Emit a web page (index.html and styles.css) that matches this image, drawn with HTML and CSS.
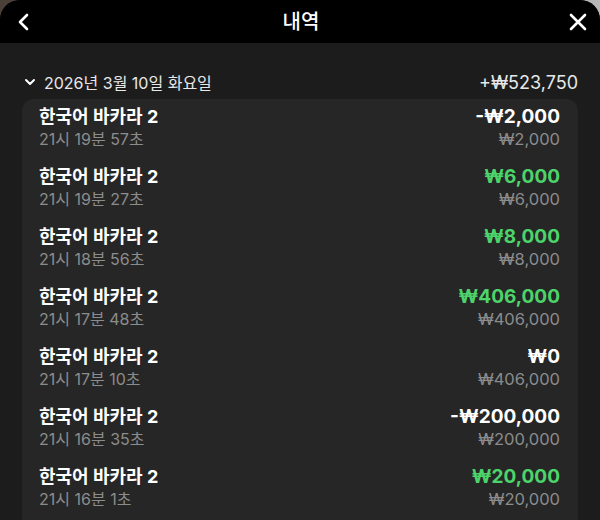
FILE: index.html
```html
<!DOCTYPE html>
<html lang="ko">
<head>
<meta charset="utf-8">
<link rel="stylesheet" href="styles.css">
</head>
<body>
<div class="sheet">
  <header class="header">
    <button class="icon-btn" aria-label="뒤로">
      <svg width="16" height="20" viewBox="0 0 16 20"><path d="M11 3 L4 10 L11 17" fill="none" stroke="#fff" stroke-width="2.6" stroke-linecap="round" stroke-linejoin="round"/></svg>
    </button>
    <h1 class="title">내역</h1>
    <button class="icon-btn" aria-label="닫기">
      <svg width="20" height="20" viewBox="0 0 20 20"><path d="M3 3 L17 17 M17 3 L3 17" fill="none" stroke="#fff" stroke-width="2.6" stroke-linecap="round"/></svg>
    </button>
  </header>
  <section class="group">
    <div class="date-row">
      <div class="date-left">
        <svg width="12" height="10" viewBox="0 0 12 10"><path d="M2 3 L6 7 L10 3" fill="none" stroke="#fff" stroke-width="2" stroke-linecap="round" stroke-linejoin="round"/></svg>
        <span>2026년 3월 10일 화요일</span>
      </div>
      <span class="total">+₩523,750</span>
    </div>
    <div class="card">
      <div class="row"><div class="left"><div class="name">한국어 바카라 2</div><div class="time">21시 19분 57초</div></div><div class="right"><div class="amt">-₩2,000</div><div class="bet">₩2,000</div></div></div>
      <div class="row"><div class="left"><div class="name">한국어 바카라 2</div><div class="time">21시 19분 27초</div></div><div class="right"><div class="amt win">₩6,000</div><div class="bet">₩6,000</div></div></div>
      <div class="row"><div class="left"><div class="name">한국어 바카라 2</div><div class="time">21시 18분 56초</div></div><div class="right"><div class="amt win">₩8,000</div><div class="bet">₩8,000</div></div></div>
      <div class="row"><div class="left"><div class="name">한국어 바카라 2</div><div class="time">21시 17분 48초</div></div><div class="right"><div class="amt win">₩406,000</div><div class="bet">₩406,000</div></div></div>
      <div class="row"><div class="left"><div class="name">한국어 바카라 2</div><div class="time">21시 17분 10초</div></div><div class="right"><div class="amt">₩0</div><div class="bet">₩406,000</div></div></div>
      <div class="row"><div class="left"><div class="name">한국어 바카라 2</div><div class="time">21시 16분 35초</div></div><div class="right"><div class="amt">-₩200,000</div><div class="bet">₩200,000</div></div></div>
      <div class="row"><div class="left"><div class="name">한국어 바카라 2</div><div class="time">21시 16분 1초</div></div><div class="right"><div class="amt win">₩20,000</div><div class="bet">₩20,000</div></div></div>
    </div>
  </section>
</div>
</body>
</html>
```

FILE: styles.css
```css
* { box-sizing: border-box; }
html, body { margin: 0; padding: 0; }
body {
  width: 600px;
  height: 520px;
  overflow: hidden;
  background: linear-gradient(90deg, #4a4038 0%, #6a6460 60%, #b8b8b8 100%);
  font-family: "Inter", "Noto Sans CJK KR", sans-serif;
  color: #fff;
}
.sheet {
  height: 520px;
  background: #1c1c1c;
  border-radius: 20px 20px 0 0;
  overflow: hidden;
}
.header {
  height: 43px;
  background: #000;
  display: flex;
  align-items: center;
  justify-content: space-between;
  padding: 0 12px 0 14px;
}
.icon-btn {
  background: none;
  border: 0;
  padding: 0;
  width: 20px;
  height: 20px;
  display: flex;
  align-items: center;
  justify-content: center;
}
.title {
  margin: 0;
  font-size: 20px;
  font-weight: 500;
  line-height: 24px;
}
.group {
  padding: 28px 22px 0 22px;
}
.date-row {
  height: 22px;
  display: flex;
  align-items: center;
  justify-content: space-between;
  font-size: 16px;
  color: #e8e8e8;
  margin-bottom: 6px;
}
.date-left {
  display: flex;
  align-items: center;
  gap: 8px;
}
.date-left svg { margin-left: 2px; }
.total { font-size: 18px; }
.card {
  background: #262626;
  border-radius: 12px;
  padding: 0 18px 20px 17px;
}
.row {
  height: 60px;
  padding-top: 7px;
  display: flex;
  justify-content: space-between;
}
.name {
  font-size: 18px;
  font-weight: 700;
  line-height: 22px;
}
.amt {
  font-size: 19px;
  font-weight: 700;
  line-height: 22px;
}
.time {
  font-size: 16px;
  line-height: 22px;
  color: #8c8c8c;
}
.bet {
  font-size: 16.5px;
  line-height: 22px;
  color: #8c8c8c;
}
.right { text-align: right; }
.amt.win { color: #4cd46a; }
```
